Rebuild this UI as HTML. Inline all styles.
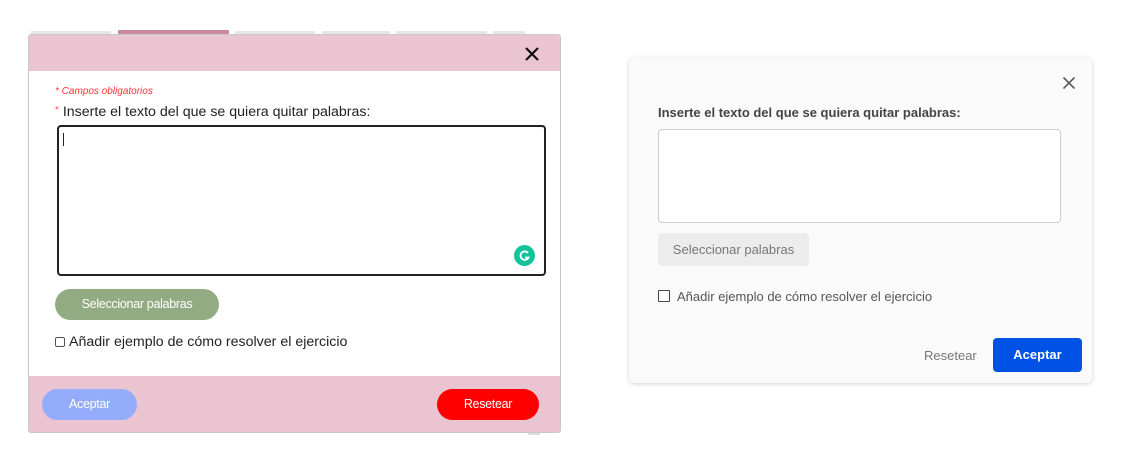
<!DOCTYPE html>
<html><head><meta charset="utf-8"><style>
*{box-sizing:border-box;margin:0;padding:0}
body{width:1144px;height:476px;background:#fff;position:relative;font-family:"Liberation Sans",sans-serif;overflow:hidden}
.abs{position:absolute}
</style></head><body>
<div class="abs" style="left:31px;top:31px;width:80px;height:3px;background:#e6e6e6"></div>
<div class="abs" style="left:118px;top:30px;width:111px;height:4px;background:#c98a9e"></div>
<div class="abs" style="left:235px;top:31px;width:80px;height:3px;background:#e6e6e6"></div>
<div class="abs" style="left:322px;top:31px;width:68px;height:3px;background:#e6e6e6"></div>
<div class="abs" style="left:396px;top:31px;width:91px;height:3px;background:#e6e6e6"></div>
<div class="abs" style="left:493px;top:31px;width:32px;height:3px;background:#e6e6e6"></div>
<div class="abs" style="left:528px;top:430px;width:12px;height:5px;background:#ddd"></div>

<div class="abs" style="left:28px;top:34px;width:533px;height:399px;border:1px solid #c8c8c8;border-radius:3px;background:#fff;overflow:hidden">
  <div class="abs" style="left:0;top:0;width:100%;height:36px;background:#eac4d0"></div>
  <svg class="abs" style="left:496px;top:12px" width="14" height="14" viewBox="0 0 14 14"><path d="M1 1L13 13M13 1L1 13" stroke="#111" stroke-width="2.2"/></svg>
  <div class="abs" style="left:26px;top:51px;font-size:10px;font-style:italic;color:#f33">* Campos obligatorios</div>
  <div class="abs" style="left:26px;top:69px;font-size:14.2px;color:#222"><span style="color:#f55;font-size:10px;vertical-align:3px">*</span> Inserte el texto del que se quiera quitar palabras:</div>
  <div class="abs" style="left:28px;top:90px;width:489px;height:151px;border:2px solid #222;border-radius:4px"></div>
  <div class="abs" style="left:34px;top:98px;width:1px;height:13px;background:#222"></div>
  <div class="abs" style="left:485px;top:210px;width:21px;height:21px;border-radius:50%;background:#15c39a"></div>
  <svg class="abs" style="left:489px;top:214px" width="13" height="13" viewBox="0 0 13 13"><path d="M10 4A4.2 4.2 0 1 0 10.5 8.5L7 8.5" fill="none" stroke="#fff" stroke-width="1.8"/></svg>
  <div class="abs" style="left:26px;top:254px;width:164px;height:31px;border-radius:16px;background:#93ab82;color:#fff;font-size:12.5px;letter-spacing:-0.3px;text-align:center;line-height:31px">Seleccionar palabras</div>
  <div class="abs" style="left:26px;top:302px;width:10px;height:10px;border:1px solid #555;border-radius:2px"></div>
  <div class="abs" style="left:40px;top:299px;font-size:14.2px;color:#222">Añadir ejemplo de cómo resolver el ejercicio</div>
  <div class="abs" style="left:0;top:341px;width:100%;height:58px;background:#eac4d0"></div>
  <div class="abs" style="left:13px;top:354px;width:95px;height:31px;border-radius:16px;background:#95acfd;color:#fff;font-size:12.5px;letter-spacing:-0.3px;text-align:center;line-height:31px">Aceptar</div>
  <div class="abs" style="left:408px;top:354px;width:102px;height:31px;border-radius:16px;background:#ff0000;color:#fff;font-size:12.5px;letter-spacing:-0.3px;text-align:center;line-height:31px">Resetear</div>
</div>

<div class="abs" style="left:629px;top:58px;width:463px;height:325px;background:#fafafa;border-radius:5px;box-shadow:0 1px 5px rgba(0,0,0,0.18)">
  <svg class="abs" style="left:434px;top:19px" width="12" height="12" viewBox="0 0 12 12"><path d="M0.5 0.5L11.5 11.5M11.5 0.5L0.5 11.5" stroke="#555" stroke-width="1.6"/></svg>
  <div class="abs" style="left:29px;top:47px;font-size:13px;font-weight:bold;color:#444">Inserte el texto del que se quiera quitar palabras:</div>
  <div class="abs" style="left:29px;top:71px;width:403px;height:94px;background:#fff;border:1px solid #ccc;border-radius:4px"></div>
  <div class="abs" style="left:29px;top:175px;width:151px;height:33px;background:#ececec;border-radius:4px;color:#777;font-size:13px;text-align:center;line-height:33px">Seleccionar palabras</div>
  <div class="abs" style="left:29px;top:232px;width:12px;height:12px;border:1.5px solid #444;border-radius:1px;background:#fff"></div>
  <div class="abs" style="left:48px;top:231px;font-size:13px;color:#555">Añadir ejemplo de cómo resolver el ejercicio</div>
  <div class="abs" style="left:295px;top:290px;font-size:13px;color:#777">Resetear</div>
  <div class="abs" style="left:364px;top:280px;width:89px;height:34px;background:#0052e6;border-radius:4px;color:#fff;font-size:13px;font-weight:bold;text-align:center;line-height:34px">Aceptar</div>
</div>
</body></html>
